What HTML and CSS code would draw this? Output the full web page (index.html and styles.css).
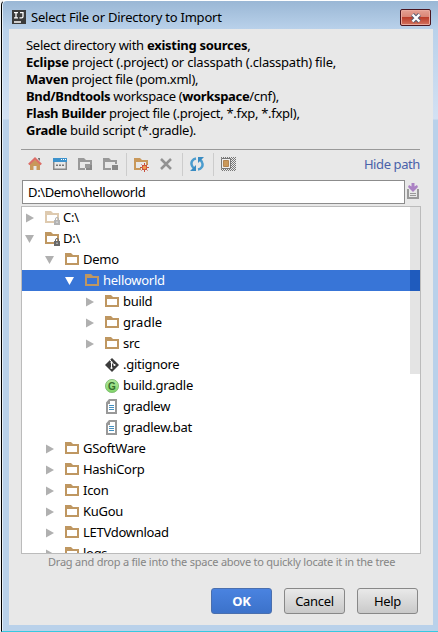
FILE: index.html
```html
<!DOCTYPE html>
<html lang="en">
<head>
<meta charset="utf-8">
<title>Select File or Directory to Import</title>
<link rel="stylesheet" href="styles.css">
</head>
<body>
<svg class="defs" width="0" height="0">
  <symbol id="folder" viewBox="0 0 14 12"><path fill-rule="evenodd" d="M0 0h6l2 2h6v10H0zM2 4v6h10V4z"/></symbol>
  <symbol id="lock" viewBox="0 0 6 8"><path fill="none" stroke="currentColor" d="M1.500 4V2q0-1.500 1.500-1.500T4.500 2v2"/><path fill="currentColor" d="M0 3h6v5H0z"/><path fill="#ddd" d="M2.500 4.500h1v1.500h-1z"/></symbol>
  <symbol id="right" viewBox="0 0 9 10"><path d="M0 .5 8 5 0 9.500z"/></symbol>
  <symbol id="down" viewBox="0 0 9 10"><path d="M0 1h9L4.500 9z"/></symbol>
  <symbol id="file" viewBox="0 0 12 15"><path fill="#999" fill-rule="evenodd" d="M4 0h8v15H1V3.500zM5 2v3H3v8h7V2z"/><path stroke="#4490c0" d="M4 6.500h5M4 8.500h5M4 10.500h5"/></symbol>
</svg>
<div class="window">
  <header class="titlebar">
    <svg class="logo" width="14" height="14"><path fill="#3b3b3b" d="M0 0h14v14H0z"/><path fill="none" stroke="#fff" stroke-width="1.300" d="M2 2.600h4M4 2.600v5.300M2 7.900h4M8 2.600h3v4q0 1.300-1.500 1.300H7.500M2 12h7"/></svg>
    <h1>Select File or Directory to Import</h1>
    <button class="close" aria-label="Close"><svg width="12" height="10"><path d="m2.500 1.500 7 7m0-7-7 7" stroke="#555d73" stroke-width="4.200"/><path d="m2.500 1.500 7 7m0-7-7 7" stroke="#fff" stroke-width="2.300"/></svg></button>
  </header>
  <main class="content">
    <div class="intro">
      <p class="l1">Select directory with <b>existing sources</b>,</p>
      <p class="l2"><b>Eclipse</b> project (.project) or classpath (.classpath) file,</p>
      <p class="l3"><b>Maven</b> project file (pom.xml),</p>
      <p class="l4"><b>Bnd/Bndtools</b> workspace (<b>workspace</b>/cnf),</p>
      <p class="l5"><b>Flash Builder</b> project file (.project, *.fxp, *.fxpl),</p>
      <p class="l6"><b>Gradle</b> build script (*.gradle).</p>
    </div>
    <div class="toolbar">
      <svg width="14" height="14"><path fill="#c9985a" d="M2 6.500 7 2.500l5 4V13H8.500V9h-3v4H2z"/><path fill="none" stroke="#dc6e68" stroke-width="2" d="m.8 7.500 6.200-6 6.200 6"/><path fill="#777" d="M10 1h2v3l-2-2z"/></svg>
      <svg width="14" height="14"><path fill="#888" fill-rule="evenodd" d="M0 3h14v10H0zM1.500 4v7.500h11V4z"/><path fill="#3d92cc" d="M0 1h14v4H0z"/><path stroke="#fff" stroke-dasharray="1 1" d="M8 2.500h5"/><path stroke="#777" stroke-width="1.500" stroke-dasharray="2 1" d="M3 8.200h8"/></svg>
      <svg width="15" height="14"><path fill="#999" fill-rule="evenodd" d="M0 1h6l2 2h6v5h-2V5H2v6h5v2H0z"/><path fill="#888" d="M8 8h6v5H8z"/><path fill="#999" d="M7 7h5v4H7z"/></svg>
      <svg width="15" height="14"><path fill="#999" fill-rule="evenodd" d="M0 1h6l2 2h6v4h-2V5H2v6h6v2H0z"/><path fill="#888" d="M9 8h6v5H9z"/></svg>
      <i class="sep s1"></i>
      <svg class="newf" width="15" height="15"><path fill="#c9985a" fill-rule="evenodd" d="M0 1h6l2 2h6v5h-2V5H2v6h5v2H0z"/><path stroke="#c94f3c" d="M10.500 6v9M6 10.500h9M7.500 7.500l6 6m0-6-6 6"/><circle cx="10.500" cy="10.500" r="2.300" fill="#f09a50" stroke="#c94f3c"/></svg>
      <svg class="del" width="12" height="12"><path stroke="#929292" stroke-width="2.500" d="m1 1 10 10m0-10L1 11"/></svg>
      <i class="sep s2"></i>
      <svg class="sync" width="14" height="14"><path fill="none" stroke="#4b9cce" stroke-width="2.500" d="M6 1.500C2.500 2 .8 5 1.700 8c.4 1.500 1.300 2.500 2.300 3.300M8 12.500c3.500-.5 5.200-3.500 4.300-6.500-.4-1.500-1.300-2.500-2.300-3.300"/><path fill="#388bc2" d="M8 0h6L8 6zM6 14H0l6-6z"/></svg>
      <i class="sep s3"></i>
      <svg class="hidden" width="15" height="15"><defs><pattern id="dots" width="2" height="2" patternUnits="userSpaceOnUse"><path fill="#777" d="M0 0h1v1H0zM1 1h1v1H1z"/></pattern></defs><path fill="url(#dots)" d="M0 0h15v14H0z"/><path fill="#eee" stroke="#777" d="M.5 1.500h9v10h-9z"/><path fill="#c9985a" stroke="#b38450" d="M2.500 3.500h5v6h-5z"/></svg>
      <a>Hide path</a>
    </div>
    <div class="pathrow"><div class="path"><span>D:\Demo\helloworld</span></div>
      <svg width="12" height="16"><path fill="#999" d="M0 6h2v8h8V6h2v10H0z"/><path stroke="#999" d="M3 10.500h6M3 12.500h6"/><path fill="#ab82c4" d="M4.500 0h3v3.500L10 2l1 2-5 5-5-5 1-2 2.500 1.500z"/></svg></div>
    <div class="tree">
      <div class="row d0"><svg class="arr"><use href="#right"/></svg><span class="ico pale"><svg class="fold"><use href="#folder"/></svg><svg class="lock"><use href="#lock"/></svg></span><span>C:\</span></div>
      <div class="row d0"><svg class="arr open"><use href="#down"/></svg><span class="ico"><svg class="fold"><use href="#folder"/></svg><svg class="lock"><use href="#lock"/></svg></span><span>D:\</span></div>
      <div class="row d1"><svg class="arr open"><use href="#down"/></svg><span class="ico"><svg class="fold"><use href="#folder"/></svg></span><span>Demo</span></div>
      <div class="row d2 selected"><svg class="arr open"><use href="#down"/></svg><span class="ico"><svg class="fold"><use href="#folder"/></svg></span><span>helloworld</span></div>
      <div class="row d3"><svg class="arr"><use href="#right"/></svg><span class="ico"><svg class="fold"><use href="#folder"/></svg></span><span>build</span></div>
      <div class="row d3"><svg class="arr"><use href="#right"/></svg><span class="ico"><svg class="fold"><use href="#folder"/></svg></span><span class="wide">gradle</span></div>
      <div class="row d3"><svg class="arr"><use href="#right"/></svg><span class="ico"><svg class="fold"><use href="#folder"/></svg></span><span>src</span></div>
      <div class="row d3"><i class="arr"></i><span class="ico"><svg width="14" height="14"><path fill="#3c3c3c" d="m7 0 7 7-7 7-7-7z"/><path fill="none" stroke="#fff" d="m5 2 1.500 1.500V10M6.500 4l3 3"/><circle cx="6.500" cy="10" r="1.100" fill="#fff"/><circle cx="9.500" cy="7" r="1.100" fill="#fff"/><circle cx="6.500" cy="4.300" r="1" fill="#fff"/></svg></span><span>.gitignore</span></div>
      <div class="row d3"><i class="arr"></i><span class="ico"><svg width="14" height="14"><defs><linearGradient id="gg" x2="0" y2="1"><stop stop-color="#b4e89e"/><stop offset="1" stop-color="#7fd468"/></linearGradient></defs><circle cx="7" cy="7" r="6.600" fill="url(#gg)" stroke="#79b86b" stroke-width=".8"/><text class="g" x="7" y="10.700" text-anchor="middle">G</text></svg></span><span>build.gradle</span></div>
      <div class="row d3"><i class="arr"></i><span class="ico"><svg width="12" height="15"><use href="#file"/></svg></span><span>gradlew</span></div>
      <div class="row d3"><i class="arr"></i><span class="ico"><svg width="12" height="15"><use href="#file"/></svg></span><span>gradlew.bat</span></div>
      <div class="row d1"><svg class="arr"><use href="#right"/></svg><span class="ico"><svg class="fold"><use href="#folder"/></svg></span><span>GSoftWare</span></div>
      <div class="row d1"><svg class="arr"><use href="#right"/></svg><span class="ico"><svg class="fold"><use href="#folder"/></svg></span><span>HashiCorp</span></div>
      <div class="row d1"><svg class="arr"><use href="#right"/></svg><span class="ico"><svg class="fold"><use href="#folder"/></svg></span><span>Icon</span></div>
      <div class="row d1"><svg class="arr"><use href="#right"/></svg><span class="ico"><svg class="fold"><use href="#folder"/></svg></span><span>KuGou</span></div>
      <div class="row d1"><svg class="arr"><use href="#right"/></svg><span class="ico"><svg class="fold"><use href="#folder"/></svg></span><span>LETVdownload</span></div>
      <div class="row d1"><svg class="arr"><use href="#right"/></svg><span class="ico"><svg class="fold"><use href="#folder"/></svg></span><span>logs</span></div>
      <div class="thumb"></div>
    </div>
    <p class="hint">Drag and drop a file into the space above to quickly locate it in the tree</p>
    <div class="buttons"><button class="ok">OK</button><button class="cancel">Cancel</button><button class="help">Help</button></div>
  </main>
</div>
</body>
</html>
```
FILE: styles.css
```css
* { box-sizing: border-box; }
body { margin: 0; width: 438px; height: 632px; overflow: hidden; background: #f4f4f4; font: 13px/17px "Noto Sans", "Open Sans", sans-serif; color: #000; }
svg { display: block; flex: none; }
.defs { position: absolute; }
p, h1 { margin: 0; white-space: nowrap; }
button { font: inherit; padding: 0; }
.window { margin-left: 1px; width: 437px; height: 632px; border-left: 1px solid #000; border-top: 1px solid #fff; border-bottom: 1px solid #38c8e0; border-radius: 5px 0 0 0; padding: 0 5px 6px 7px; background: linear-gradient(#9ab7d5, #b9d1ea 28px, #d3e1f3 118px, #b9d1ea 119px); box-shadow: inset 1px 0 #e4eff9; }
.titlebar { height: 28px; display: flex; align-items: flex-start; }
.logo { margin: 9px 5px 0 3px; }
h1 { font-size: 13px; font-weight: 400; line-height: 17px; margin-top: 8px; letter-spacing: -.22px; }
.close { margin: 8px 2px 0 auto; width: 31px; height: 17px; border: 1px solid #4b1620; border-radius: 2px; background: linear-gradient(#e5a193, #d98475 48%, #bb3e2b 50%, #d4735f); box-shadow: inset 0 0 0 1px #eaa99d; display: flex; align-items: center; justify-content: center; }
.content { height: 596px; width: 424px; background: #e8e8e8; padding: 8px 0 0 12px; }
.intro { padding-left: 5px; height: 112px; }
.l1 { letter-spacing: -.28px; }
.l2 { letter-spacing: -.21px; }
.l3 { letter-spacing: -.27px; }
.l4 { letter-spacing: -.34px; }
.l5 { letter-spacing: -.3px; }
.l6 { letter-spacing: -.27px; }
.toolbar { width: 399px; height: 31px; border-top: 1px solid #999; display: flex; align-items: flex-start; padding: 7px 0 0 7px; }
.toolbar > svg { margin-right: 11px; }
.toolbar > svg:nth-child(3) { margin-right: 10px; }
.toolbar > svg:nth-child(4) { margin-right: 8px; }
.sep { width: 1px; height: 23px; margin-top: -4px; background: #ccc; }
.s1 { margin-right: 7px; }
.toolbar > .del { margin: 1px 10px 0 0; }
.s2 { margin-right: 7px; }
.toolbar > .sync { margin-right: 9px; }
.s3 { margin-right: 7px; }
.toolbar a { margin: -1px 0 0 auto; color: #4a62aa; letter-spacing: -.4px; }
.pathrow { display: flex; height: 26px; align-items: flex-start; }
.path { width: 383px; height: 24px; margin-left: 1px; border: 1px solid #8c8c8c; background: #fff; padding: 3px 5px; letter-spacing: -.36px; }
.pathrow svg { margin: 3px 0 0 2px; }
.tree { position: relative; width: 400px; height: 348px; border: 1px solid #bbb; background: #fff; overflow: hidden; letter-spacing: -.28px; }
.row { position: relative; z-index: 1; height: 21px; display: flex; align-items: center; fill: #b0b0b0; white-space: nowrap; }
.d0 { padding-left: 4px; }
.d1 { padding-left: 24px; }
.d2 { padding-left: 44px; }
.d3 { padding-left: 64px; }
.selected { background: linear-gradient(90deg, #3875d7 388px, #1f5bbd 388px); color: #fff; fill: #fff; }
.wide { letter-spacing: 0; }
.arr { width: 9px; height: 10px; margin-right: 10px; }
.open { margin-left: -1px; margin-right: 11px; }
.ico { position: relative; width: 15px; height: 15px; margin-right: 3px; display: flex; align-items: center; fill: #bf9761; }
.fold { width: 14px; height: 12px; margin-top: -1px; }
.lock { position: absolute; right: 0; bottom: 0; width: 6px; height: 8px; color: #696969; }
.pale { opacity: .5; }
.g { font: bold 10px "Liberation Sans", sans-serif; letter-spacing: 0; fill: #356b2d; }
.thumb { position: absolute; top: 0; right: 0; width: 10px; height: 167px; background: #e4e4e4; }
.hint { font-size: 11px; line-height: 15px; margin: 0 0 0 27px; color: #858585; letter-spacing: -.23px; }
.buttons { display: flex; padding-left: 190px; margin-top: 19px; }
.buttons button { height: 26px; width: 61px; border: 1px solid #888; border-radius: 3px; background: linear-gradient(#e9e9e9, #c9c9c9); margin-right: 12px; letter-spacing: -.3px; }
.buttons .ok { border-color: #4a6fae; background: linear-gradient(#4a83e0, #3c72ca); color: #fff; font-weight: 700; }
```
